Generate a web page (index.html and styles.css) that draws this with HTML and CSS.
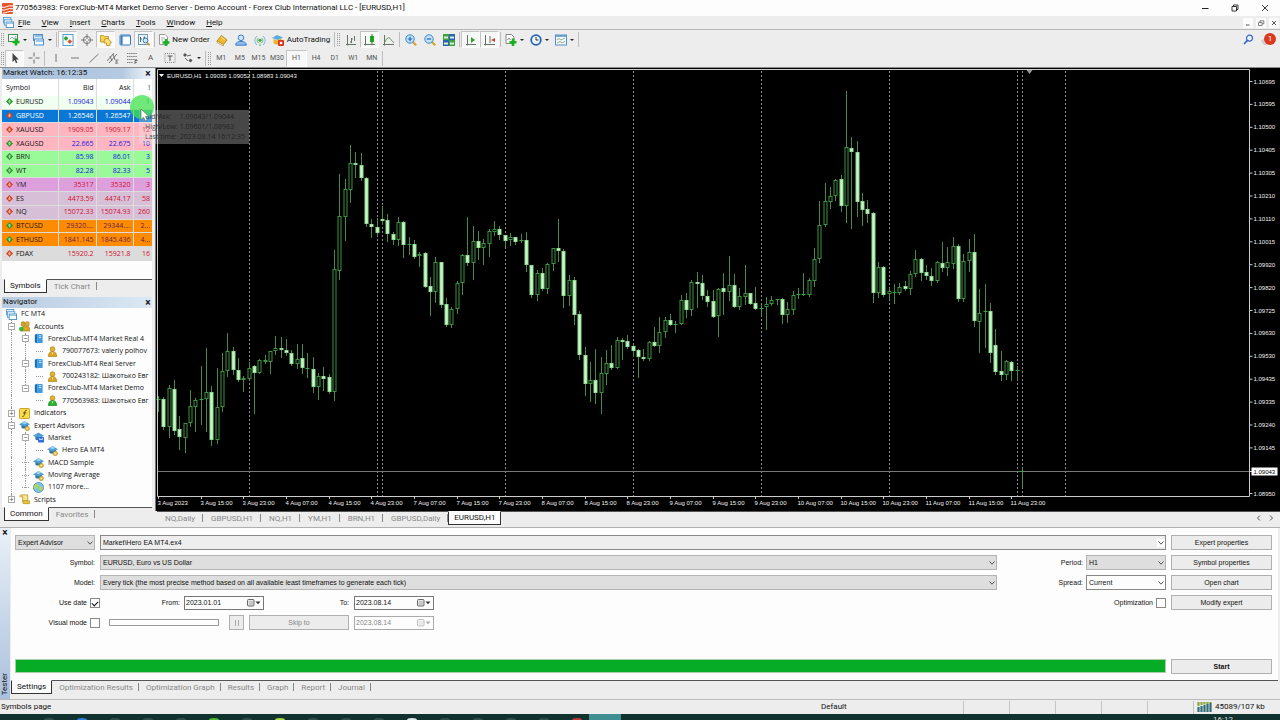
FILE: index.html
```html
<!DOCTYPE html>
<html lang="en">
<head>
    <meta charset="UTF-8">
    <meta name="viewport" content="width=device-width, initial-scale=1.0">
    <title>770563983: ForexClub-MT4 Market Demo Server</title>
    <link rel="stylesheet" href="styles.css">
</head>
<body>
    <!-- shared icons -->
    <svg class="defs" aria-hidden="true">
        <symbol id="i-up" viewBox="0 0 8 8"><path d="M4 0L8 4L4 8L0 4Z" fill="#2f8f2f"/><path d="M4 1.8L6 4H4.8V6H3.2V4H2Z" fill="#8fe88f"/></symbol>
        <symbol id="i-down" viewBox="0 0 8 8"><path d="M4 0L8 4L4 8L0 4Z" fill="#d0401f"/><path d="M4 6.2L2 4H3.2V2H4.8V4H6Z" fill="#ffb09a"/></symbol>
        <symbol id="i-windows" viewBox="0 0 12 12"><rect x=".5" y=".5" width="8" height="6" fill="#dff0fb" stroke="#5b9fd0"/><rect x="1.5" y="3" width="8" height="6" fill="#eef8ff" stroke="#5b9fd0"/><rect x="3.5" y="5.5" width="8" height="6" fill="#fff" stroke="#4a90c4"/><path d="M4 7H11" stroke="#7cc0e8"/></symbol>
        <symbol id="i-server" viewBox="0 0 12 12"><path d="M2 2L5 .5V11.5L2 10Z" fill="#1b6fb5"/><rect x="5" y="1" width="5.5" height="10" rx="1" fill="#3d9be6"/><path d="M6.5 3H9M6.5 5H9" stroke="#d4ecff"/></symbol>
        <symbol id="i-user" viewBox="0 0 12 12"><circle cx="6" cy="3.4" r="2.6" fill="#e3b32c" stroke="#a87c10" stroke-width=".7"/><path d="M1.5 11.5C1.5 7.5 3.5 6 6 6S10.5 7.5 10.5 11.5Z" fill="#dca61e" stroke="#a87c10" stroke-width=".7"/><path d="M5 7L6 9.5L7 7Z" fill="#fff3c0"/></symbol>
        <symbol id="i-user-on" viewBox="0 0 12 12"><circle cx="6" cy="3.4" r="2.6" fill="#e3b32c" stroke="#a87c10" stroke-width=".7"/><path d="M1.5 11.5C1.5 7.5 3.5 6 6 6S10.5 7.5 10.5 11.5Z" fill="#27b32b" stroke="#148018" stroke-width=".7"/><path d="M5 7L6 9.5L7 7Z" fill="#e6ffe6"/></symbol>
        <symbol id="i-users" viewBox="0 0 12 12"><rect x="2.5" y=".8" width="4" height="5" rx="1.6" fill="#d6a51e" stroke="#94700f" stroke-width=".6"/><rect x="7" y=".8" width="4" height="5" rx="1.6" fill="#e3b32c" stroke="#94700f" stroke-width=".6"/><path d="M2.5 11C2.5 7 4 5.6 7.5 5.6S12 7 12 11Z" fill="#dca61e" stroke="#94700f" stroke-width=".6"/><circle cx="2.6" cy="8.8" r="2.6" fill="#3fb53f"/></symbol>
        <symbol id="i-func" viewBox="0 0 12 12"><rect x=".5" y=".5" width="11" height="11" rx="1" fill="#f7dc4e" stroke="#c49a16"/><path d="M8.5 2.5C6.5 2 6.5 4 6.2 5.5S5.5 9.8 3.6 9.3M4.3 5.4H8" fill="none" stroke="#5b4500"/></symbol>
        <symbol id="i-hat" viewBox="0 0 12 12"><path d="M0 5L6 1.2L12 4.6L6.5 7.6Z" fill="#4d9fd6"/><path d="M2.6 5.6V8.4C4.5 10 8 9.6 9.6 7.8V5.2L6.5 7.2Z" fill="#2c74ac"/><path d="M3.4 3.6L6 1.2L9 3.2L6 4.6Z" fill="#9fd3f2"/><circle cx="9" cy="9.2" r="2.4" fill="#eac044" stroke="#a98212" stroke-width=".6"/><circle cx="9" cy="9.2" r=".8" fill="#fff6cf"/></symbol>
        <symbol id="i-market" viewBox="0 0 12 12"><path d="M0 4L6 .6L12 4L6.5 7Z" fill="#4d9fd6"/><path d="M2.6 5V8C4.5 9.5 7 9 7 8V6.4Z" fill="#2c74ac"/><rect x="5.5" y="5.5" width="6.5" height="6" rx="1" fill="#2f6fd8"/><path d="M7.2 6.6V8.2H10.2V6.6" fill="none" stroke="#fff" stroke-width=".8"/></symbol>
        <symbol id="i-globe" viewBox="0 0 12 12"><circle cx="6" cy="6" r="5.5" fill="#7cc4ee" stroke="#3a86ba" stroke-width=".8"/><path d="M2 3C4 1 6 2 5.5 4S3 6 3.5 9C1.5 8 .8 5 2 3ZM7 5C9 4 10.5 5 10.5 7S8 10.5 7.5 9.5S6 6 7 5Z" fill="#b7d83a"/></symbol>
        <symbol id="i-script" viewBox="0 0 12 12"><path d="M2 1H9.5V7.5H4V3H1C1 2 1.4 1 2 1Z" fill="#f6e38e" stroke="#b38f1a" stroke-width=".8"/><path d="M4 7.5H11.5V10.5H5C4 10.5 4 9 4 7.5Z" fill="#ecc93e" stroke="#b38f1a" stroke-width=".8"/></symbol>
        <symbol id="i-chev" viewBox="0 0 8 8"><path d="M1.5 2.5L4 5.2L6.5 2.5" fill="none" stroke="#444" stroke-width=".9"/></symbol>
        <symbol id="i-cal" viewBox="0 0 14 8"><rect x=".5" y=".5" width="6.5" height="6.5" rx="1" fill="#e4e4e4" stroke="#666"/><path d="M2 3H6M2 5H6" stroke="#999" stroke-width=".7"/><path d="M8.5 2.5H13.5L11 5.2Z" fill="#333"/></symbol>
    </svg>

    <header class="title-bar">
        <svg class="app-icon" viewBox="0 0 11 11"><rect width="11" height="11" rx="1" fill="#e8552a"/><path d="M0 4.2C3 5.5 6 1.5 11 3M0 7C3 8.2 6 4.4 11 5.8M1 10C4 10.4 7 7.4 11 8.6" fill="none" stroke="#fff" stroke-width="1"/></svg>
        <h1>770563983: ForexClub-MT4 Market Demo Server - Demo Account - Forex Club International LLC - [EURUSD,H1]</h1>
        <div class="window-btns">
            <button aria-label="Minimize"><svg viewBox="0 0 8 8"><path d="M1 4.5H7.5" stroke="#222"/></svg></button>
            <button aria-label="Restore"><svg viewBox="0 0 8 8"><path d="M1 2.5H5.5V7H1ZM2.5 2.5V1H7V5.5H5.5" fill="none" stroke="#222" stroke-width=".9"/></svg></button>
            <button aria-label="Close"><svg viewBox="0 0 8 8"><path d="M1 1L7 7M7 1L1 7" stroke="#222" stroke-width=".9"/></svg></button>
        </div>
    </header>

    <nav class="menu-bar">
        <svg class="menu-icon"><use href="#i-windows"/></svg>
        <a href="#"><u>F</u>ile</a>
        <a href="#"><u>V</u>iew</a>
        <a href="#"><u>I</u>nsert</a>
        <a href="#"><u>C</u>harts</a>
        <a href="#"><u>T</u>ools</a>
        <a href="#"><u>W</u>indow</a>
        <a href="#"><u>H</u>elp</a>
        <div class="mdi-btns">
            <button aria-label="Minimize chart"><svg viewBox="0 0 8 8"><path d="M2 6H5.5" stroke="#555"/></svg></button>
            <button aria-label="Restore chart"><svg viewBox="0 0 8 8"><path d="M1.5 3.5H5V6.5H1.5ZM3 3.5V1.8H6.8V4.8H5" fill="none" stroke="#666" stroke-width=".8"/></svg></button>
            <button aria-label="Close chart"><svg viewBox="0 0 8 8"><path d="M2 2L6 6M6 2L2 6" stroke="#555"/></svg></button>
        </div>
    </nav>

    <div class="toolbar">
        <span class="grip"></span>
        <button class="drop" aria-label="New chart"><svg viewBox="0 0 12 12"><rect x=".5" y=".5" width="9" height="7" fill="#fff" stroke="#3f8f4a"/><path d="M2 5L4 3L6 5L8 2" fill="none" stroke="#8ab"/><path d="M8 4.5V11.5M4.5 8H11.5" stroke="#17b31c" stroke-width="2.6"/></svg></button>
        <button class="drop" aria-label="Profiles"><svg viewBox="0 0 12 12"><rect x=".5" y=".5" width="9" height="6" fill="#d7ebf9" stroke="#4f90c8"/><rect x="1.5" y="5" width="9" height="6" fill="#f4faff" stroke="#4f90c8"/><path d="M2 2H9M3 7H10" stroke="#4f90c8"/></svg></button>
        <span class="sep"></span>
        <button class="pressed" aria-label="Market Watch"><svg viewBox="0 0 12 12"><rect x="1" y=".5" width="10" height="11" fill="#f5fbff" stroke="#5aa0d0"/><path d="M4 2L6.4 4.4L4 6.8L1.6 4.4Z" fill="#27a52a"/><path d="M7.8 5.2L10.2 7.6L7.8 10L5.4 7.6Z" fill="#e2562c"/></svg></button>
        <button aria-label="Data Window"><svg viewBox="0 0 12 12"><circle cx="6" cy="6" r="3.6" fill="none" stroke="#777"/><path d="M6 0V5M6 7V12M0 6H5M7 6H12" stroke="#777"/></svg></button>
        <button class="pressed" aria-label="Navigator"><svg viewBox="0 0 12 12"><path d="M.5 1.5H3.5L4.5 2.5H8.5V8H.5Z" fill="#f5d357" stroke="#b98d18" stroke-width=".8"/><path d="M4.5 5L8 4.5L11.5 8.5L10 9V11.5H6.5V9L4 9Z" fill="#f9e07a" stroke="#b98d18" stroke-width=".8"/></svg></button>
        <button aria-label="Terminal"><svg viewBox="0 0 12 12"><rect x="1" y="1" width="10.5" height="10" rx="1" fill="#fdfeff" stroke="#3478c0"/><path d="M2.6 2V10.5" stroke="#3478c0" stroke-width="2"/><path d="M2 2H11" stroke="#3478c0"/></svg></button>
        <button class="pressed" aria-label="Strategy Tester"><svg viewBox="0 0 12 12"><rect x=".5" y=".5" width="9" height="10" fill="#eaf4fc" stroke="#6a9cc4"/><path d="M2.5 8V3M2 5H4M6.5 8V2.5M5 4H7" stroke="#567"/><circle cx="7.5" cy="6.5" r="2.4" fill="#cde7fa" stroke="#3c7fb8"/><path d="M9.2 8.4L11.6 11.4" stroke="#d39a22" stroke-width="1.6"/></svg></button>
        <span class="sep"></span>
        <button class="text-btn"><svg viewBox="0 0 12 12"><path d="M1.5 .5H7L9.5 3V10.5H1.5Z" fill="#fff" stroke="#999"/><path d="M3 4H7M3 6H5" stroke="#aaa"/><path d="M8 5V12M4.5 8.5H11.5" stroke="#17b31c" stroke-width="2.6"/></svg>New Order</button>
        <button aria-label="MetaEditor"><svg viewBox="0 0 12 12"><path d="M1 7L5.5 1.5L11 6L7.5 10.5Z" fill="#f0b92e" stroke="#a8760e" stroke-width=".8"/><path d="M1 7L7.5 10.5V12L1 8.5Z" fill="#fff" stroke="#a8760e" stroke-width=".6"/><path d="M5 3L9 6" stroke="#fbe49b"/></svg></button>
        <button aria-label="Community"><svg viewBox="0 0 12 12"><circle cx="6" cy="3.8" r="2.8" fill="#cfe4f8" stroke="#3a7fc8"/><path d="M.8 10C1.5 6.6 10.5 6.6 11.2 10V11.2H.8Z" fill="#8fbcec" stroke="#3a7fc8"/></svg></button>
        <button aria-label="Signals"><svg viewBox="0 0 12 12"><path d="M3 2C.2 4.5 .2 8.5 3 11M9 2C11.8 4.5 11.8 8.5 9 11" fill="none" stroke="#7fb3d6"/><path d="M4.4 4C2.8 5.5 2.8 7.5 4.4 9M7.6 4C9.2 5.5 9.2 7.5 7.6 9" fill="none" stroke="#57b36a"/><circle cx="6" cy="6.2" r="1.5" fill="#2da53a"/><path d="M6 7.5L5 12H7Z" fill="#8ac79a"/></svg></button>
        <button class="text-btn auto"><svg viewBox="0 0 12 12"><path d="M0 4L5 1L11 3.5L6 6Z" fill="#5aaadc"/><path d="M1.5 5V9C3 11 8 11 9.5 9V4L6 6.5Z" fill="#edb233"/><rect x="6" y="6" width="6" height="6" rx="1" fill="#d8331c"/><rect x="7.8" y="7.8" width="2.4" height="2.4" fill="#fff"/></svg>AutoTrading</button>
        <span class="sep"></span>
        <span class="grip"></span>
        <button aria-label="Bar chart"><svg viewBox="0 0 12 12"><path d="M2.5 1V11.5M1 10.5H11M6.5 4V9M5 8H6.5M6.5 5H8M9.5 2V7" fill="none" stroke="#657565"/></svg></button>
        <button class="pressed" aria-label="Candlesticks"><svg viewBox="0 0 12 12"><path d="M1.5 2V11.5M0 10.5H11" fill="none" stroke="#657565"/><rect x="6" y="2" width="4" height="6" fill="#1fb324"/><path d="M8 0V10" stroke="#148018"/></svg></button>
        <button aria-label="Line chart"><svg viewBox="0 0 12 12"><path d="M1.5 1V11.5M0 10.5H11" fill="none" stroke="#657565"/><path d="M2 8C4 3 6 3 7.5 5S9.5 8 11 8.5" fill="none" stroke="#5b9a60"/></svg></button>
        <span class="sep"></span>
        <button aria-label="Zoom in"><svg viewBox="0 0 12 12"><path d="M7.5 7.5L11.2 11.2" stroke="#d8a02c" stroke-width="2"/><circle cx="5" cy="5" r="4.2" fill="#c5e3f8" stroke="#3c86c4"/><path d="M5 2.8V7.2M2.8 5H7.2" stroke="#1f66b8" stroke-width="1.2"/></svg></button>
        <button aria-label="Zoom out"><svg viewBox="0 0 12 12"><path d="M7.5 7.5L11.2 11.2" stroke="#d8a02c" stroke-width="2"/><circle cx="5" cy="5" r="4.2" fill="#c5e3f8" stroke="#3c86c4"/><path d="M2.8 5H7.2" stroke="#1f66b8" stroke-width="1.2"/></svg></button>
        <button aria-label="Tile windows"><svg viewBox="0 0 12 12"><rect width="6" height="6" fill="#3ea13b"/><rect x="6" width="6" height="6" fill="#2c62b8"/><rect y="6" width="6" height="6" fill="#2c62b8"/><rect x="6" y="6" width="6" height="6" fill="#3ea13b"/><path d="M1 3.5H5M7 3.5H11M1 9.5H5M7 9.5H11" stroke="#dcefd9" stroke-width="2"/></svg></button>
        <span class="sep"></span>
        <button class="pressed" aria-label="Auto scroll"><svg viewBox="0 0 12 12"><path d="M2.5 1V11.5M1 10.5H11" fill="none" stroke="#657565"/><path d="M6 3L10 6L6 9Z" fill="#27a52a"/></svg></button>
        <button class="pressed" aria-label="Chart shift"><svg viewBox="0 0 12 12"><path d="M1.5 1V11.5M0 10.5H11M6 2V9" fill="none" stroke="#657565"/><path d="M11 4V8L7 6Z" fill="#c84a2c"/></svg></button>
        <span class="sep"></span>
        <button class="drop" aria-label="Indicators"><svg viewBox="0 0 12 12"><path d="M1 .5H6.5L9 3V9.5H1Z" fill="#fff" stroke="#888"/><path d="M2.5 6L4 4L5.5 6" fill="none" stroke="#888"/><path d="M8 4.5V12M4.5 8.2H11.5" stroke="#17b31c" stroke-width="2.6"/></svg></button>
        <button class="drop" aria-label="Periods"><svg viewBox="0 0 12 12"><circle cx="6" cy="6" r="4.8" fill="#eef6ff" stroke="#2465b4" stroke-width="1.8"/><path d="M6 3V6H8.5" fill="none" stroke="#333"/></svg></button>
        <button class="drop" aria-label="Templates"><svg viewBox="0 0 12 12"><rect x=".5" y="1" width="11" height="10" fill="#f4faff" stroke="#5590c0"/><path d="M1 2H11" stroke="#5590c0" stroke-width="1.5"/><path d="M2 6L4 4.5L6 6L10 4M2 9L5 7.5L7 9L10 7.5" fill="none" stroke="#7a9a7a" stroke-width=".8"/></svg></button>
        <span class="sep"></span>
        <div class="bar-right">
            <button aria-label="Search"><svg viewBox="0 0 12 12"><circle cx="7.5" cy="4.2" r="3" fill="#e8f2ff" stroke="#3568c0" stroke-width="1.2"/><path d="M5.4 6.4L2 10" stroke="#3568c0" stroke-width="1.6"/></svg></button>
            <button class="alerts" aria-label="Notifications"><svg viewBox="0 0 14 12"><path d="M1 8C0 6 3 5 5 6L8 9L5 11.5C3 12 4 9.5 1 8Z" fill="#d4d4d8" stroke="#aaa" stroke-width=".5"/></svg><span class="badge">1</span></button>
        </div>
    </div>

    <div class="toolbar lines">
        <span class="grip"></span>
        <button class="pressed" aria-label="Cursor"><svg viewBox="0 0 12 12"><path d="M3.5 1V10L5.6 8L7 11.2L8.4 10.5L7 7.5H9.8Z" fill="#444"/></svg></button>
        <button aria-label="Crosshair"><svg viewBox="0 0 12 12"><path d="M6 .5V4.5M6 7.5V11.5M.5 6H4.5M7.5 6H11.5" stroke="#666"/></svg></button>
        <span class="sep"></span>
        <button aria-label="Vertical line"><svg viewBox="0 0 12 12"><path d="M6 2V10" stroke="#777"/></svg></button>
        <button aria-label="Horizontal line"><svg viewBox="0 0 12 12"><path d="M2 6H10" stroke="#777"/></svg></button>
        <button aria-label="Trendline"><svg viewBox="0 0 12 12"><path d="M1.5 10.5L10.5 2" stroke="#777"/></svg></button>
        <button aria-label="Channel"><svg viewBox="0 0 12 12"><path d="M0 9L7 1M2 11L10 2M3 4L5 9M6 2L8 8" stroke="#666" stroke-width=".9"/><path d="M11.5 8H9V12H11.5M9 10H11" fill="none" stroke="#666" stroke-width=".8"/></svg></button>
        <button aria-label="Fibonacci"><svg viewBox="0 0 12 12"><path d="M1 1.5H11M1 4.5H11M1 7.5H11M1 10.5H7" stroke="#777" stroke-dasharray="1.4 .7"/><path d="M9 12V8.5H11.5M9 10.2H11" fill="none" stroke="#555" stroke-width=".8"/></svg></button>
        <button aria-label="Text">A</button>
        <button aria-label="Text label"><svg viewBox="0 0 12 12"><rect x="1" y="1.5" width="10" height="9" fill="none" stroke="#888" stroke-dasharray="1 1"/><path d="M3.5 4H8.5M6 4V9" stroke="#555"/></svg></button>
        <button class="drop" aria-label="Arrows"><svg viewBox="0 0 12 12"><path d="M1 3L3 1L5 3L3 5ZM6.5 8.5L8.5 6.5L10.5 8.5L8.5 10.5Z" fill="#555"/><path d="M5 4L9 3M3 6L6 9" stroke="#555" stroke-width=".9"/></svg></button>
        <span class="sep"></span>
        <span class="grip"></span>
        <div class="periods">
            <button>M1</button><button>M5</button><button>M15</button><button>M30</button><button class="pressed">H1</button><button>H4</button><button>D1</button><button>W1</button><button>MN</button>
        </div>
        <span class="sep"></span>
    </div>

    <main class="workspace">
        <aside class="side">
            <section class="panel market">
                <h2 class="panel-title">Market Watch: 16:12:35<button aria-label="Close Market Watch">×</button></h2>
                <table class="quotes">
                    <thead>
                        <tr><th>Symbol</th><th>Bid</th><th>Ask</th><th>!</th></tr>
                    </thead>
                    <tbody>
                        <tr class="mint up"><td><svg><use href="#i-up"/></svg>EURUSD</td><td>1.09043</td><td>1.09044</td><td>1</td></tr>
                        <tr class="selected"><td><svg><use href="#i-down"/></svg>GBPUSD</td><td>1.26546</td><td>1.26547</td><td></td></tr>
                        <tr class="pink down"><td><svg><use href="#i-down"/></svg>XAUUSD</td><td>1909.05</td><td>1909.17</td><td>12</td></tr>
                        <tr class="pink up"><td><svg><use href="#i-up"/></svg>XAGUSD</td><td>22.665</td><td>22.675</td><td>10</td></tr>
                        <tr class="green up"><td><svg><use href="#i-up"/></svg>BRN</td><td>85.98</td><td>86.01</td><td>3</td></tr>
                        <tr class="green up"><td><svg><use href="#i-up"/></svg>WT</td><td>82.28</td><td>82.33</td><td>5</td></tr>
                        <tr class="plum down"><td><svg><use href="#i-down"/></svg>YM</td><td>35317</td><td>35320</td><td>3</td></tr>
                        <tr class="thistle down"><td><svg><use href="#i-down"/></svg>ES</td><td>4473.59</td><td>4474.17</td><td>58</td></tr>
                        <tr class="thistle down"><td><svg><use href="#i-down"/></svg>NQ</td><td>15072.33</td><td>15074.93</td><td>260</td></tr>
                        <tr class="orange"><td><svg><use href="#i-up"/></svg>BTCUSD</td><td>29320....</td><td>29344....</td><td>2...</td></tr>
                        <tr class="orange"><td><svg><use href="#i-up"/></svg>ETHUSD</td><td>1841.145</td><td>1845.436</td><td>4...</td></tr>
                        <tr class="grey down"><td><svg><use href="#i-down"/></svg>FDAX</td><td>15920.2</td><td>15921.8</td><td>16</td></tr>
                    </tbody>
                </table>
                <div class="tabs">
                    <button class="active">Symbols</button>
                    <button>Tick Chart</button>
                </div>
            </section>

            <section class="panel navigator">
                <h2 class="panel-title">Navigator<button aria-label="Close Navigator">×</button></h2>
                <ul class="tree">
                    <li class="l0"><svg><use href="#i-windows"/></svg>FC MT4</li>
                    <li class="l1"><i class="box">−</i><svg><use href="#i-users"/></svg>Accounts</li>
                    <li class="l2"><i class="box">−</i><svg><use href="#i-server"/></svg>ForexClub-MT4 Market Real 4</li>
                    <li class="l3"><i></i><svg><use href="#i-user"/></svg>790077673: valeriy polhov</li>
                    <li class="l2"><i class="box">−</i><svg><use href="#i-server"/></svg>ForexClub-MT4 Real Server</li>
                    <li class="l3"><i></i><svg><use href="#i-user"/></svg>700243182: Шакотько Евг</li>
                    <li class="l2 last"><i class="box">−</i><svg><use href="#i-server"/></svg>ForexClub-MT4 Market Demo</li>
                    <li class="l3 end"><i></i><svg><use href="#i-user-on"/></svg>770563983: Шакотько Евг</li>
                    <li class="l1"><i class="box">+</i><svg><use href="#i-func"/></svg>Indicators</li>
                    <li class="l1"><i class="box">−</i><svg><use href="#i-hat"/></svg>Expert Advisors</li>
                    <li class="l2"><i class="box">−</i><svg><use href="#i-market"/></svg>Market</li>
                    <li class="l3"><i></i><svg><use href="#i-hat"/></svg>Hero EA MT4</li>
                    <li class="l2"><i></i><svg><use href="#i-hat"/></svg>MACD Sample</li>
                    <li class="l2"><i></i><svg><use href="#i-hat"/></svg>Moving Average</li>
                    <li class="l2 last"><i></i><svg><use href="#i-globe"/></svg>1107 more...</li>
                    <li class="l1 last"><i class="box">+</i><svg><use href="#i-script"/></svg>Scripts</li>
                </ul>
                <div class="tabs">
                    <button class="active">Common</button>
                    <button>Favorites</button>
                </div>
            </section>
        </aside>

        <section class="charts">
            <svg id="chart" class="chart" role="img" aria-label="EURUSD,H1 candlestick chart"></svg>
            <div class="tabs chart-tabs">
                <button>NQ,Daily</button>
                <button>GBPUSD,H1</button>
                <button>NQ,H1</button>
                <button>YM,H1</button>
                <button>BRN,H1</button>
                <button>GBPUSD,Daily</button>
                <button class="active">EURUSD,H1</button>
                <span class="scroll"><svg viewBox="0 0 18 8"><path d="M4 1.5L1.5 4L4 6.5M14 1.5L16.5 4L14 6.5" fill="none" stroke="#555"/></svg></span>
            </div>
        </section>

        <div class="tooltip">
            <span>Bid/Ask:</span><span>1.09043/1.09044</span>
            <span>High/Low:</span><span>1.09601/1.08983</span>
            <span>Last time:</span><span>2023.08.14 16:12:35</span>
        </div>
        <div class="pointer"><svg viewBox="0 0 10 14"><path d="M1 1V11.5L3.6 9.2L5.4 13L7.2 12.2L5.5 8.5H9Z" fill="#fff" stroke="#555" stroke-width=".6"/></svg></div>
    </main>

    <section class="tester">
        <div class="tester-side"><button aria-label="Close Tester">×</button><span>Tester</span></div>
        <div class="tester-main">
            <form class="settings" onsubmit="return false">
                <div class="fields">
                    <div class="row">
                        <div class="combo type"><select aria-label="Program type"><option>Expert Advisor</option></select><svg><use href="#i-chev"/></svg></div>
                        <div class="combo light grow"><select aria-label="Expert"><option>Market\Hero EA MT4.ex4</option></select><svg><use href="#i-chev"/></svg></div>
                    </div>
                    <div class="row">
                        <label class="lead" for="symbol">Symbol:</label>
                        <div class="combo grow"><select id="symbol"><option>EURUSD, Euro vs US Dollar</option></select><svg><use href="#i-chev"/></svg></div>
                        <label class="mid" for="period">Period:</label>
                        <div class="combo short"><select id="period"><option>H1</option></select><svg><use href="#i-chev"/></svg></div>
                    </div>
                    <div class="row">
                        <label class="lead" for="model">Model:</label>
                        <div class="combo grow"><select id="model"><option>Every tick (the most precise method based on all available least timeframes to generate each tick)</option></select><svg><use href="#i-chev"/></svg></div>
                        <label class="mid" for="spread">Spread:</label>
                        <div class="combo short white"><select id="spread"><option>Current</option></select><svg><use href="#i-chev"/></svg></div>
                    </div>
                    <div class="row">
                        <label class="check-label" for="use-date">Use date</label>
                        <input type="checkbox" id="use-date" checked>
                        <label class="from" for="date-from">From:</label>
                        <div class="date"><input type="text" id="date-from" value="2023.01.01"><svg><use href="#i-cal"/></svg></div>
                        <label class="to" for="date-to">To:</label>
                        <div class="date"><input type="text" id="date-to" value="2023.08.14"><svg><use href="#i-cal"/></svg></div>
                        <label class="optimize" for="optimization">Optimization</label>
                        <input type="checkbox" id="optimization">
                    </div>
                    <div class="row">
                        <label class="check-label" for="visual">Visual mode</label>
                        <input type="checkbox" id="visual">
                        <input type="range" aria-label="Visual mode speed" disabled>
                        <button class="btn pause" aria-label="Pause" disabled><svg viewBox="0 0 8 8"><path d="M2.5 1V7M5.5 1V7" stroke="#aaa"/></svg></button>
                        <button class="btn skip" disabled>Skip to</button>
                        <div class="date off"><input type="text" aria-label="Skip to date" value="2023.08.14" disabled><svg><use href="#i-cal"/></svg></div>
                    </div>
                    <div class="progress" role="progressbar" aria-label="Test progress"></div>
                </div>
                <div class="actions">
                    <button class="btn">Expert properties</button>
                    <button class="btn">Symbol properties</button>
                    <button class="btn">Open chart</button>
                    <button class="btn">Modify expert</button>
                    <button class="btn start">Start</button>
                </div>
            </form>
            <div class="tabs tester-tabs">
                <button class="active">Settings</button>
                <button>Optimization Results</button>
                <button>Optimization Graph</button>
                <button>Results</button>
                <button>Graph</button>
                <button>Report</button>
                <button>Journal</button>
            </div>
        </div>
    </section>

    <footer class="status-bar">
        <span class="hint">Symbols page</span>
        <span class="profile">Default</span>
        <span class="cell"></span>
        <span class="cell"></span>
        <span class="cell"></span>
        <span class="cell"></span>
        <span class="cell"></span>
        <span class="net"><svg viewBox="0 0 16 10"><path d="M1.5 10V5M4.5 10V4M7.5 10V3M10.5 10V2M13.5 10V1" stroke="#2f6f7a" stroke-width="2.2"/><path d="M1.5 0V4M4.5 0V3M7.5 0V2.5M10.5 0V2M13.5 0V1" stroke="#8aa83a" stroke-width="2.2"/></svg>45089/107 kb</span>
    </footer>
    <div class="taskbar">
        <i class="app"></i><i class="app blue"></i><i class="app"></i><i class="app"></i><i class="app"></i><i class="app green"></i>
        <i class="app"></i><i class="app lime"></i><i class="app"></i><i class="app"></i><i class="app"></i><i class="app white"></i>
        <i class="app"></i><i class="app"></i><i class="app"></i><i class="app"></i><i class="app red"></i><i class="app current"></i>
        <time>16:12</time>
    </div>

    <script src="chart.js"></script>
</body>
</html>
```
FILE: styles.css
```css
* {
    box-sizing: border-box;
}
body {
    margin: 0;
    height: 100vh;
    display: flex;
    flex-direction: column;
    overflow: hidden;
    background: #ededed;
    color: #111;
    font-family: Roboto, "Liberation Sans", sans-serif;
    font-size: 8px;
    line-height: 10px;
}
button, input, select {
    font: inherit;
    color: inherit;
    margin: 0;
    padding: 0;
}
button {
    background: none;
    border: 0;
}
h1, h2 {
    margin: 0;
    font-size: inherit;
    font-weight: normal;
}
svg {
    flex: none;
}
.defs {
    position: absolute;
    width: 0;
    height: 0;
}

/* title and menu */
.title-bar {
    display: flex;
    align-items: center;
    height: 16px;
    padding-left: 2px;
    background: #fdfdfd;
}
.app-icon {
    width: 11px;
    height: 11px;
    margin-right: 2px;
}
.window-btns {
    display: flex;
    margin-left: auto;
}
.window-btns button {
    width: 30px;
    height: 14px;
}
.window-btns svg, .mdi-btns svg {
    display: block;
    width: 8px;
    height: 8px;
    margin: auto;
}
.menu-bar {
    display: flex;
    align-items: center;
    gap: 11px;
    height: 14px;
    padding-left: 3px;
    border-bottom: 1px solid #b8b8b8;
}
.menu-bar a {
    color: #111;
    text-decoration: none;
}
.menu-icon {
    width: 11px;
    height: 11px;
    margin-right: -7px;
}
.mdi-btns {
    display: flex;
    gap: 3px;
    margin-left: auto;
    padding-right: 1px;
}
.mdi-btns button {
    width: 10px;
    height: 10px;
    background: #fbfbfb;
}

/* toolbars */
.toolbar {
    display: flex;
    align-items: center;
    height: 19px;
}
.toolbar button {
    display: flex;
    align-items: center;
    justify-content: center;
    flex: none;
    width: 19px;
    height: 17px;
}
.toolbar svg {
    width: 12px;
    height: 12px;
}
.toolbar .drop {
    width: 25px;
    gap: 3px;
}
.toolbar .drop::after {
    content: "";
    border: 2px solid transparent;
    border-top-color: #222;
    border-bottom: 0;
}
.toolbar .pressed {
    background: #f8f8f8;
    border: 1px solid #c4c4c4;
    border-right-color: #fff;
    border-bottom-color: #fff;
}
.toolbar .text-btn {
    width: 56px;
    gap: 2px;
}
.toolbar .auto {
    width: 64px;
    gap: 3px;
}
.grip {
    width: 3px;
    height: 13px;
    margin: 0 1px;
    border-left: 1px dotted #999;
    border-right: 1px dotted #999;
}
.sep {
    width: 1px;
    height: 15px;
    margin: 0 1px;
    background: #bdbdbd;
}
.bar-right {
    display: flex;
    margin-left: auto;
    padding-right: 4px;
}
.alerts {
    position: relative;
}
.badge {
    position: absolute;
    top: 2px;
    right: 0;
    width: 12px;
    height: 12px;
    border-radius: 50%;
    background: #d9391f;
    color: #fff;
    line-height: 12px;
    text-align: center;
}
.lines {
    height: 18px;
    color: #555;
}
.periods {
    display: flex;
    width: 169px;
    font-size: 7px;
}
.toolbar .periods button {
    flex: 1;
}

/* workspace */
.workspace {
    position: relative;
    display: flex;
    flex: 1;
    min-height: 0;
    border-top: 1px solid #8c8c8c;
}
.side {
    display: flex;
    flex-direction: column;
    width: 152px;
    margin-left: 2px;
    padding-bottom: 5px;
}
.panel {
    display: flex;
    flex-direction: column;
}
.market {
    height: 225px;
}
.navigator {
    flex: 1;
    min-height: 0;
    margin-top: 4px;
}
.market, .navigator {
    background: linear-gradient(#fdfdfd, #fdfdfd) 0 0 / 150px calc(100% - 14px) no-repeat;
}
.panel-title {
    display: flex;
    justify-content: space-between;
    flex: none;
    width: 150px;
    height: 11px;
    padding-left: 1px;
    line-height: 10px;
    background: linear-gradient(90deg, #a9c1dc, #b4cae2 80%, #e4ecf5 95%);
}
.navigator .panel-title {
    background: linear-gradient(90deg, #b8cbe0, #dbe8f5);
}
.panel-title button {
    width: 8px;
    font-size: 10px;
    font-weight: bold;
    line-height: 9px;
}
.quotes, .tree, .tooltip {
    font-family: "Open Sans", "Noto Sans", sans-serif;
    font-size: 7px;
}
.quotes {
    table-layout: fixed;
    border-collapse: collapse;
    width: 150px;
    height: 182px;
    background: #fff;
}
.quotes th, .quotes td {
    padding: 0 2px;
    line-height: 10px;
    text-align: right;
    font-weight: normal;
    border-right: 1px solid #dcdcdc;
    white-space: nowrap;
    overflow: hidden;
}
.quotes td {
    border-bottom: 1px solid #dcdcdc;
}
.quotes thead tr {
    height: 17px;
}
.quotes th:first-child, .quotes td:first-child {
    width: 56px;
    padding-left: 4px;
    text-align: left;
}
.quotes th:nth-child(3) {
    width: 37px;
}
.quotes th:nth-child(2) {
    width: 38px;
}
.quotes svg {
    width: 7px;
    height: 7px;
    margin-right: 3px;
    vertical-align: -1px;
}
.quotes tr > :last-child {
    border-right: 0;
}
.up td + td {
    color: #1616e0;
}
.down td + td {
    color: #d0102c;
}
.mint { background: #f0fff0; }
.pink { background: #ffb6c1; }
.green { background: #98fb98; }
.plum { background: #dda0dd; }
.thistle { background: #d8bfd8; }
.orange { background: #ff8c00; }
.grey { background: #dcdcdc; }
.orange td + td {
    color: #6a1c50;
}
.selected {
    background: #0a78d4;
    color: #fff;
}

/* tab strips */
.tabs {
    display: flex;
    flex: none;
    height: 14px;
    margin-top: auto;
    color: #888;
}
.tabs::after {
    content: "";
    flex: 1;
    border-top: 1px solid #555;
}
.tabs button {
    position: relative;
    padding: 0 7px;
    border-top: 1px solid #555;
    line-height: 12px;
}
.tabs button:not(.active)::after {
    content: "";
    position: absolute;
    right: 0;
    top: 2px;
    height: 8px;
    border-right: 1px solid #888;
}
.tabs .active {
    padding: 0 5px;
    background: #fdfdfd;
    color: #111;
    border: 1px solid #333;
    border-top-color: #fdfdfd;
}
.side .tabs {
    width: 150px;
    padding-left: 2px;
}

/* navigator tree */
.tree {
    display: flex;
    flex-direction: column;
    flex: none;
    width: 150px;
    height: 198px;
    margin: 0;
    padding: 0;
    list-style: none;
    overflow: hidden;
}
.tree li {
    position: relative;
    display: flex;
    align-items: center;
    flex: 1;
    gap: 4px;
    padding-left: 4px;
    white-space: nowrap;
}
.tree svg {
    width: 11px;
    height: 11px;
}
.tree i {
    position: relative;
    z-index: 1;
    flex: none;
    width: 7px;
    height: 7px;
}
.tree .box {
    border: 1px solid #aaa;
    background: #fff;
    color: #444;
    font: 7px/5px "Liberation Sans", sans-serif;
    text-align: center;
}
.tree .l1 { padding-left: 6px; }
.tree .l2 { padding-left: 20px; }
.tree .l3 { padding-left: 34px; }
.tree li:not(.l0)::before {
    content: "";
    position: absolute;
    left: 9px;
    top: 0;
    bottom: 0;
    width: 0;
    border-left: 1px dotted #999;
}
.tree .l1.last::before {
    bottom: 6px;
}
.tree .l2::after, .tree .l3::after {
    content: "";
    position: absolute;
    left: 23px;
    top: 0;
    bottom: 0;
    width: 0;
    border-left: 1px dotted #999;
}
.tree .last::after {
    bottom: 6px;
}
.tree .end::after {
    display: none;
}
.tree i:not(.box) {
    border-top: 1px dotted #999;
    height: 1px;
}

/* chart */
.charts {
    display: flex;
    flex-direction: column;
    flex: 1;
    min-width: 0;
    margin-left: 1px;
}
.chart {
    display: block;
    flex: 1;
    width: 100%;
    min-height: 0;
    background: #000;
    border-left: 1px solid #777;
}
.chart text {
    fill: #f0f0f0;
    font-family: "Liberation Sans", sans-serif;
    font-size: 6px;
}
.chart .tag {
    fill: #000;
}
.grid-line {
    stroke: #8c8c8c;
    stroke-dasharray: 2 2;
}
.axis {
    stroke: #ccc;
    fill: none;
}
.bid-line {
    stroke: #777;
}
.wick {
    stroke: #468a48;
}
.bull {
    fill: #000;
    stroke: #3d9440;
}
.bear {
    fill: #c8f7c8;
    stroke: #8fdc92;
}
.doji {
    stroke: #2fae33;
}
.charts .chart-tabs {
    height: 14px;
    margin: 0 0 1px;
}
.chart-tabs {
    padding-left: 2px;
}
.chart-tabs button:not(.active) {
    padding: 0 8px;
}
.chart-tabs .scroll {
    order: 1;
    padding: 2px 6px 0;
    border-top: 1px solid #555;
}
.chart-tabs .scroll svg {
    width: 18px;
    height: 8px;
}

/* quote tooltip and mouse pointer, over the panels */
.tooltip {
    position: absolute;
    left: 139px;
    top: 42px;
    display: grid;
    grid-template-columns: auto auto;
    column-gap: 2px;
    justify-content: start;
    width: 110px;
    padding: 2px 6px;
    background: rgba(235, 235, 235, 0.3);
    color: rgba(20, 20, 20, 0.75);
    white-space: nowrap;
}
.pointer {
    position: absolute;
    left: 130px;
    top: 27px;
    width: 24px;
    height: 24px;
    border-radius: 50%;
    background: rgba(70, 225, 80, 0.75);
}
.pointer svg {
    width: 10px;
    height: 14px;
    margin: 13px 0 0 10px;
}

/* strategy tester */
.tester {
    display: flex;
    height: 172px;
    margin-top: 1px;
    border-top: 1px solid #b0b0b0;
}
.tester-side {
    display: flex;
    flex-direction: column;
    justify-content: space-between;
    align-items: center;
    width: 10px;
    padding-bottom: 4px;
    background: linear-gradient(#e9f0f8, #a9c1dc);
}
.tester-side button {
    font-size: 10px;
    font-weight: bold;
    line-height: 9px;
}
.tester-side span {
    writing-mode: vertical-rl;
    transform: rotate(180deg);
}
.tester-main {
    display: flex;
    flex-direction: column;
    flex: 1;
    min-width: 0;
    padding: 0 2px 0 1px;
}
.settings {
    display: flex;
    flex: 1;
    gap: 5px;
    padding: 7px 6px 5px 4px;
    background: #fdfdfd;
    font-family: "Liberation Sans", sans-serif;
    font-size: 7px;
}
.fields, .actions {
    display: flex;
    flex-direction: column;
    gap: 5px;
}
.fields {
    flex: 1;
}
.actions {
    width: 101px;
}
.row {
    display: flex;
    align-items: center;
    height: 15px;
}
.lead {
    width: 85px;
    padding-right: 5px;
    text-align: right;
}
.mid {
    width: 89px;
    padding-right: 3px;
    text-align: right;
}
.combo {
    position: relative;
    height: 15px;
}
.combo select {
    display: block;
    width: 100%;
    height: 15px;
    padding: 0 2px;
    appearance: none;
    border: 1px solid #b4b4b4;
    border-radius: 0;
    background: #dedede;
}
.combo svg {
    position: absolute;
    right: 1px;
    top: 4px;
    width: 8px;
    height: 8px;
    pointer-events: none;
}
.combo.type {
    width: 80px;
    margin-right: 5px;
}
.combo.short {
    width: 80px;
}
.combo.grow {
    flex: 1;
}
.combo.light select {
    background: #eee;
    border-color: #888;
}
.combo.light svg {
    background: #fdfdfd;
}
.combo.white select {
    background: #fdfdfd;
    border-color: #888;
}
.check-label {
    width: 75px;
    padding-right: 3px;
    text-align: right;
}
input[type="checkbox"] {
    width: 10px;
    height: 10px;
    appearance: none;
    border: 1px solid #888;
    background: #fdfdfd;
}
input[type="checkbox"]:checked::after {
    content: "";
    display: block;
    width: 5px;
    height: 3px;
    margin: 2px 1px;
    border: solid #111;
    border-width: 0 0 1px 1px;
    transform: rotate(-45deg);
}
.from {
    width: 84px;
    padding-right: 4px;
    text-align: right;
}
.to {
    width: 90px;
    padding-right: 5px;
    text-align: right;
}
.date {
    display: flex;
    align-items: center;
    width: 80px;
    height: 14px;
    border: 1px solid #777;
    background: #fdfdfd;
}
.date input {
    flex: 1;
    min-width: 0;
    padding-left: 1px;
    border: 0;
    background: none;
}
.date svg {
    width: 14px;
    height: 8px;
    margin-right: 2px;
}
.date.off {
    margin-left: 5px;
    border-color: #aaa;
    color: #888;
}
.date.off svg {
    opacity: 0.4;
}
.optimize {
    margin-left: auto;
    padding-right: 3px;
}
input[type="range"] {
    width: 110px;
    height: 7px;
    margin: 0 10px 0 9px;
    appearance: none;
    border: 1px solid #999;
    background: #fdfdfd;
}
input[type="range"]::-webkit-slider-thumb {
    appearance: none;
    width: 0;
}
.btn {
    height: 15px;
    border: 1px solid #b0b0b0;
    background: #ececec;
}
.btn:disabled {
    color: #888;
}
.pause {
    width: 15px;
    margin-right: 5px;
}
.pause svg {
    display: block;
    width: 8px;
    height: 8px;
    margin: auto;
}
.skip {
    width: 100px;
}
.progress {
    height: 14px;
    margin: auto 0 2px;
    border: 1px solid #a8cfa8;
    background: #06ab26;
}
.start {
    margin: auto 0 1px;
    font-weight: bold;
}
.tester-tabs {
    margin-bottom: 5px;
}
.tester-tabs button:not(.active) {
    padding-right: 6px;
}

/* status bar */
.status-bar {
    display: flex;
    align-items: center;
    height: 15px;
    border-top: 1px solid #bbb;
}
.hint {
    flex: 1;
    padding-left: 1px;
}
.profile {
    width: 142px;
}
.cell {
    width: 46px;
    height: 13px;
    border-left: 1px solid #c4c4c4;
}
.net {
    display: flex;
    align-items: center;
    gap: 2px;
    width: 87px;
    height: 13px;
    padding-left: 3px;
    border-left: 1px solid #c4c4c4;
}
.net svg {
    width: 16px;
    height: 10px;
}
.taskbar {
    display: flex;
    gap: 23px;
    height: 6px;
    padding-left: 44px;
    overflow: hidden;
    background: #12322f;
    color: #ddd;
}
.app {
    width: 10px;
    height: 4px;
    margin-top: 4px;
    border-radius: 50% 50% 0 0;
    background: #35504d;
}
.app.blue { background: #2f7de0; }
.app.green { background: #4fbf2f; }
.app.lime { background: #a8d840; }
.app.white { background: #dfe8e8; }
.app.red { background: #c03a3a; }
.app.current {
    width: 32px;
    margin: 0 0 0 -16px;
    height: 6px;
    border-radius: 0;
    background: #3f8f92;
}
.taskbar time {
    margin: 1px 47px 0 auto;
}
```
FILE: chart.js
```javascript
// candle: [high, body top, body bottom, low, d = down / u = up]
const candles = [
    [396,399,400,411,'u'],[397,399,427,429,'d'],[385,388,427,437,'u'],[380,389,431,434,'d'],[416,429,437,449,'d'],
    [423,423,438,452,'u'],[390,406,423,426,'u'],[398,400,407,431,'u'],[366,399,400,424,'u'],[348,392,399,431,'u'],
    [386,392,440,445,'d'],[368,407,440,443,'u'],[353,371,407,411,'u'],[333,351,371,376,'u'],[347,351,370,374,'d'],
    [358,370,380,381,'d'],[376,378,380,391,'u'],[362,368,379,379,'u'],[365,366,373,413,'d'],[359,360,373,373,'u'],
    [355,360,362,363,'u'],[351,351,362,373,'u'],[336,348,351,354,'u'],[337,348,350,357,'d'],[339,350,353,355,'d'],
    [350,353,364,365,'d'],[344,359,364,368,'u'],[344,358,368,373,'d'],[353,368,369,377,'d'],[357,369,387,392,'d'],
    [373,376,387,399,'u'],[367,376,379,390,'d'],[374,377,392,393,'d'],[250,269,392,400,'u'],[174,216,271,279,'u'],
    [179,189,217,240,'u'],[145,163,190,202,'u'],[152,163,165,177,'d'],[153,165,178,180,'d'],[177,178,224,226,'d'],
    [219,224,227,237,'d'],[218,227,233,235,'d'],[206,219,221,224,'d'],[214,220,234,241,'d'],[232,234,240,244,'d'],
    [217,222,240,245,'u'],[221,222,245,257,'d'],[237,244,245,254,'d'],[240,244,257,258,'d'],[252,254,256,266,'u'],
    [252,253,287,287,'d'],[277,286,292,315,'d'],[257,262,292,302,'u'],[262,262,305,307,'d'],[298,304,325,326,'d'],
    [307,309,325,327,'u'],[281,283,309,313,'u'],[254,255,283,294,'u'],[217,255,263,265,'d'],[226,241,263,279,'u'],
    [231,241,248,259,'d'],[239,243,248,264,'u'],[229,231,244,256,'u'],[221,229,232,235,'u'],[226,229,235,239,'d'],
    [235,235,241,246,'d'],[233,237,240,245,'u'],[237,237,242,244,'d'],[234,240,241,242,'d'],[232,240,265,271,'d'],
    [265,265,295,297,'d'],[270,273,295,300,'u'],[268,273,289,290,'d'],[263,264,289,293,'u'],[248,248,264,270,'u'],
    [219,248,251,261,'d'],[249,251,296,307,'d'],[275,280,296,305,'u'],[277,280,315,324,'d'],[311,314,355,359,'d'],
    [347,355,384,395,'d'],[362,380,384,401,'u'],[349,380,393,403,'d'],[357,373,393,413,'u'],[350,363,374,384,'u'],
    [345,363,368,369,'d'],[337,340,368,368,'u'],[338,340,342,359,'d'],[335,341,347,348,'d'],[345,346,351,356,'d'],
    [349,350,357,377,'d'],[349,357,359,360,'d'],[341,342,359,360,'u'],[327,342,346,346,'d'],[317,332,346,352,'u'],
    [317,320,332,337,'u'],[314,320,325,325,'d'],[321,324,325,332,'u'],[295,300,324,324,'u'],[293,300,310,317,'d'],
    [280,282,310,315,'u'],[272,282,284,307,'d'],[275,283,296,299,'d'],[290,296,302,306,'d'],[290,301,317,317,'d'],
    [288,289,316,336,'u'],[273,288,292,314,'d'],[256,285,292,300,'u'],[274,285,307,307,'d'],[288,296,307,309,'u'],
    [265,293,297,304,'u'],[293,293,304,304,'d'],[287,303,309,309,'d'],[305,308,309,314,'u'],[297,304,307,329,'u'],
    [296,300,304,305,'u'],[299,299,300,304,'d'],[298,299,315,323,'d'],[302,309,315,322,'u'],[291,295,310,314,'u'],
    [288,294,295,298,'u'],[273,294,295,295,'u'],[278,280,295,296,'u'],[248,259,281,286,'u'],[201,225,259,262,'u'],
    [183,201,225,226,'u'],[187,196,202,208,'u'],[179,180,196,200,'u'],[175,179,206,211,'d'],[91,147,206,222,'u'],
    [137,148,152,228,'d'],[141,152,202,216,'d'],[193,201,210,225,'d'],[200,209,214,222,'d'],[212,213,293,302,'d'],
    [262,267,293,297,'u'],[266,267,295,296,'d'],[288,291,294,298,'u'],[284,292,293,303,'d'],[283,287,293,294,'u'],
    [281,286,289,290,'d'],[271,274,289,294,'u'],[250,259,274,276,'u'],[258,259,273,280,'d'],[265,272,276,279,'d'],
    [268,276,281,285,'d'],[261,262,281,282,'u'],[242,263,268,271,'d'],[247,262,268,275,'u'],[237,246,264,268,'u'],
    [244,246,299,301,'d'],[254,261,299,301,'u'],[239,252,261,271,'u'],[234,252,321,326,'d'],[289,313,322,352,'u'],
    [284,311,312,347,'d'],[303,311,353,362,'d'],[329,345,372,374,'d'],[351,371,375,380,'d'],[360,361,375,379,'u'],
    [361,362,371,380,'d'],[366,370,371,380,'u'],[468,471,472,487,'u']
];

const prices = ['1.10695','1.10595','1.10500','1.10405','1.10305','1.10210','1.10110','1.10015','1.09920',
    '1.09820','1.09725','1.09630','1.09530','1.09435','1.09335','1.09240','1.09145','1.09043','1.08950'];
const days = [3, 4, 7, 8, 9, 10, 11];
const hours = ['07:00', '15:00', '23:00'];

const STEP = 16 / 3;   // distance between candles
const LEFT = 2;
const TOP = 68;        // candle values count from the window's top edge
const svg = document.getElementById('chart');

function add(name, attrs, text) {
    const el = document.createElementNS('http://www.w3.org/2000/svg', name);
    for (const key in attrs) el.setAttribute(key, attrs[key]);
    if (text) el.textContent = text;
    svg.appendChild(el);
}

function candleX(i) {
    return Math.round(LEFT + i * STEP) + 0.5;
}

function timeLabel(i) {
    if (i === 0) return '3 Aug 2023';
    return days[Math.floor(i / 3)] + ' Aug ' + hours[i % 3];
}

function draw() {
    svg.innerHTML = '';
    const width = svg.clientWidth;
    const right = width - 30.5;
    const bottom = 428;

    // period separators
    [17, 41, 42, 65, 89, 113, 137, 161, 162, 170].forEach(i => {
        add('line', { class: 'grid-line', x1: candleX(i), x2: candleX(i), y1: 3, y2: bottom });
    });
    add('line', { class: 'bid-line', x1: 1, x2: right, y1: 403.5, y2: 403.5 });

    candles.forEach(([high, top, base, low, dir], i) => {
        const x = candleX(i);
        add('line', { class: 'wick', x1: x, x2: x, y1: high - TOP, y2: low - TOP + 1 });
        if (base - top <= 1) {
            add('line', { class: 'doji', x1: x - 2, x2: x + 2, y1: top - TOP + 0.5, y2: top - TOP + 0.5 });
        } else {
            add('rect', {
                class: dir === 'u' ? 'bull' : 'bear',
                x: x - 1.5, y: top - TOP + 0.5, width: 3, height: base - top - 1
            });
        }
    });

    add('path', { class: 'axis', d: `M1.5 1.5H${right}V${bottom + 0.5}H1.5Z` });

    // time scale
    for (let i = 0; i < 21; i++) {
        const x = candleX(i * 8);
        add('line', { class: 'axis', x1: x, x2: x, y1: bottom, y2: bottom + 3 });
        add('text', { x: x - 1, y: 437 }, timeLabel(i));
    }

    // price scale
    prices.forEach((price, i) => {
        const y = i === 17 ? 403.5 : i === 18 ? 425.5 : 13.5 + i * 22.9;
        add('line', { class: 'axis', x1: right, x2: right + 3, y1: y, y2: y });
        if (i === 17) add('rect', { x: right + 2, y: y - 4, width: 26, height: 8, fill: '#fff' });
        add('text', { class: i === 17 ? 'tag' : '', x: right + 4, y: y + 2 }, price);
    });

    add('path', { d: 'M3 6H8L5.5 9Z', fill: '#fff' });
    add('text', { x: 11, y: 10 }, 'EURUSD,H1 \u00a01.09039 1.09052 1.08983 1.09043');
    add('path', { d: `M${right - 223} 2H${right - 217}L${right - 220} 6Z`, fill: '#999' });
}

draw();
window.addEventListener('resize', draw);
```
